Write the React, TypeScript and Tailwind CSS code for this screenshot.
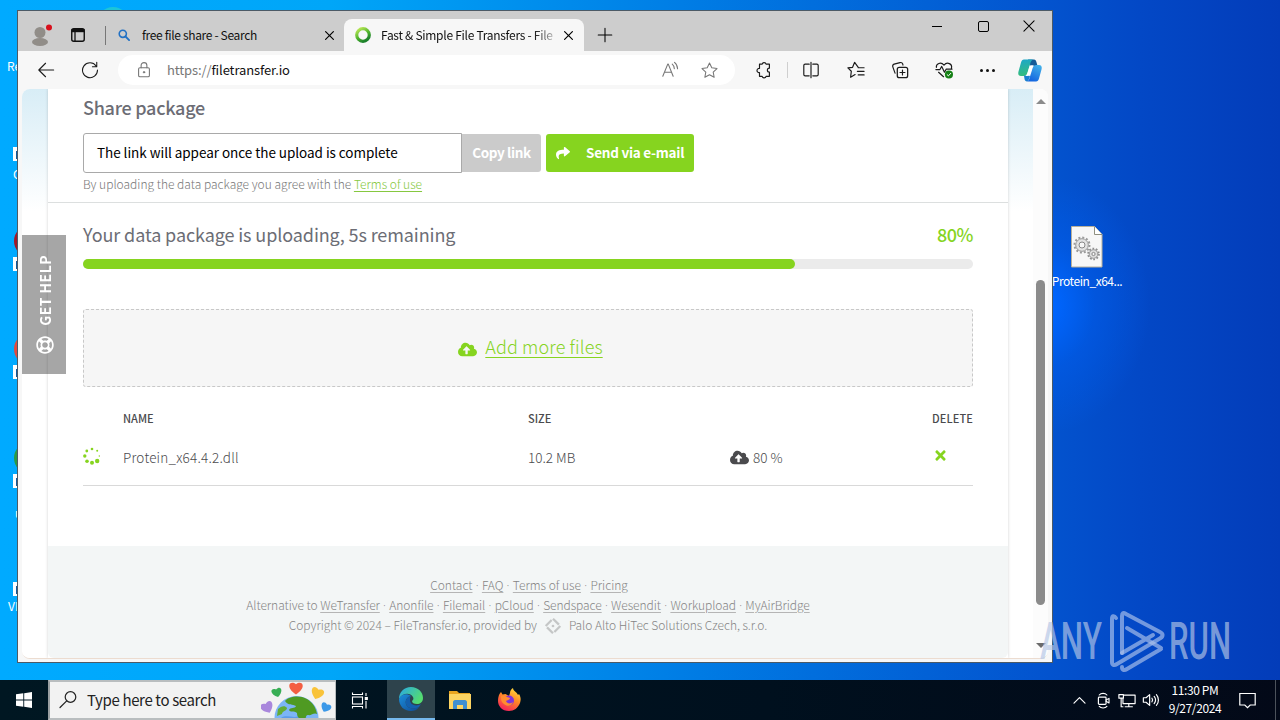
import type { ReactNode } from "react";
import { FaCloudUploadAlt, FaRegLifeRing, FaShare, FaTimes } from "react-icons/fa";

interface IconProps {
  children: ReactNode;
  size?: number;
  className?: string;
}

function Icon({ children, size = 20, className = "" }: IconProps) {
  return (
    <svg
      width={size}
      height={size}
      viewBox="0 0 20 20"
      fill="none"
      stroke="currentColor"
      strokeWidth={1.1}
      strokeLinecap="round"
      strokeLinejoin="round"
      className={`shrink-0 ${className}`}
    >
      {children}
    </svg>
  );
}

const STAR = "M10 2.2l2.4 5 5.5.7-4 3.8 1 5.4-4.9-2.6-4.9 2.6 1-5.4-4-3.8 5.5-.7z";

const SHORTCUTS = [
  { top: "top-[147px]", color: "bg-transparent", label: "C", labelTop: "top-[166px]", labelLeft: "left-[13px]" },
  { top: "top-[257px]", color: "bg-[#a01828]", label: "", labelTop: "top-[292px]", labelLeft: "left-[15px]" },
  { top: "top-[365px]", color: "bg-[#e04a3f]", label: "", labelTop: "top-[400px]", labelLeft: "left-[15px]" },
  { top: "top-[474px]", color: "bg-[#2c9a45]", label: "u", labelTop: "top-[505px]", labelLeft: "left-[15px]" },
  { top: "top-[582px]", color: "bg-transparent", label: "VLC", labelTop: "top-[598px]", labelLeft: "left-[8px]" },
];

function DesktopIcons() {
  return (
    <div className="text-[12px] leading-4 text-white">
      <span className="absolute left-[7px] top-[58px]">Recycle</span>
      <div className="absolute left-[97px] top-[7px] h-8 w-8 rounded-full bg-[#1cc5d8]" />
      {SHORTCUTS.map((s) => (
        <div key={s.top}>
          <div className={`absolute left-[14px] ${s.top}`}>
            <div className={`-mt-8 h-8 w-8 rounded-full ${s.color}`} />
          </div>
          <div className={`absolute left-[13px] h-3.5 w-3 bg-white ${s.top}`}>
            <div className="ml-[3px] mt-1 h-2 w-2 bg-[#145a9c]" />
          </div>
          <span className={`absolute ${s.labelTop} ${s.labelLeft}`}>{s.label}</span>
        </div>
      ))}
      <div className="absolute left-[1050px] top-[225px] flex w-[74px] flex-col items-center">
        <svg width="34" height="44" viewBox="0 0 34 44">
          <path d="M1.5 1.5h23l7.5 8v32.500h-30.500z" fill="#f7f7f7" stroke="#b8b09a" />
          <path d="M24.500 1.500v8h7.500" fill="#fff" stroke="#8f8f80" />
          <circle cx="12" cy="20" r="7.500" fill="none" stroke="#9a9a9a" strokeWidth="2" strokeDasharray="2 1.930" />
          <circle cx="12" cy="20" r="6.300" fill="#e2e2e2" stroke="#999" />
          <circle cx="12" cy="20" r="3" fill="#f7f7f7" stroke="#888" />
          <circle cx="23.500" cy="29" r="5.300" fill="none" stroke="#8e8e8e" strokeWidth="2" strokeDasharray="1.700 1.630" />
          <circle cx="23.500" cy="29" r="4.300" fill="#ddd" stroke="#999" />
          <circle cx="23.500" cy="29" r="1.600" fill="#f7f7f7" stroke="#888" />
        </svg>
        <span className="mt-1 whitespace-nowrap tracking-[-0.45px]">Protein_x64...</span>
      </div>
    </div>
  );
}

function TabStrip() {
  return (
    <div className="flex h-10 bg-[#cdcdcd] text-[12px] tracking-[-0.34px] text-[#111]">
      <div className="flex w-[87px] items-center pl-3 pt-2">
        <svg width="22" height="24" viewBox="0 0 22 24">
          <circle cx="10" cy="9.500" r="5.500" fill="#918d88" />
          <ellipse cx="10" cy="19" rx="8" ry="4" fill="#918d88" />
          <circle cx="19" cy="4.500" r="3" fill="#d8101c" />
        </svg>
        <svg width="16" height="16" viewBox="0 0 16 16" className="ml-[18px] shrink-0">
          <rect x="1.750" y="1.750" width="12.500" height="12.500" rx="2" fill="none" stroke="#111" strokeWidth="1.400" />
          <path d="M1.500 2h13v3.200h-13z" fill="#111" />
          <path d="M5 5v9" stroke="#111" strokeWidth="1.300" />
        </svg>
      </div>
      <div className="mt-[15px] h-[19px] w-px bg-[#777]" />
      <div className="flex w-[238px] items-center pl-3 pt-2">
        <Icon size={12} className="text-[#2271c4]">
          <circle cx="8" cy="8" r="6" strokeWidth="2.600" />
          <path d="M12.500 12.500l6 6" strokeWidth="3" />
        </Icon>
        <span className="ml-3 flex-1 whitespace-nowrap">free file share - Search</span>
        <Icon size={13} className="mr-2 text-black">
          <path d="M4 4l12 12M16 4L4 16" strokeWidth="1.800" />
        </Icon>
      </div>
      <div className="mt-2 flex h-8 w-60 items-center rounded-t-lg bg-[#f7f7f7] pl-[11px]">
        <svg width="16" height="16" viewBox="0 0 16 16" className="shrink-0">
          <defs>
            <linearGradient id="ring" x1="0" y1="0" x2="0.600" y2="1">
              <stop offset="0" stopColor="#c4ec5a" />
              <stop offset="0.600" stopColor="#4fb32c" />
              <stop offset="1" stopColor="#1c812c" />
            </linearGradient>
          </defs>
          <circle cx="8" cy="8" r="6.300" fill="none" stroke="url(#ring)" strokeWidth="3.200" />
        </svg>
        <span className="ml-[10px] w-[173px] whitespace-nowrap tracking-[-0.28px] [mask-image:linear-gradient(to_right,black_88%,#0004)]">
          Fast &amp; Simple File Transfers - File
        </span>
        <Icon size={13} className="ml-2 text-black">
          <path d="M4 4l12 12M16 4L4 16" strokeWidth="1.800" />
        </Icon>
      </div>
      <div className="flex flex-1 justify-between pl-[13px]">
        <Icon size={16} className="mt-4 text-black">
          <path d="M10 1.500v17M1.500 10h17" strokeWidth="1.300" />
        </Icon>
        <div className="flex h-8 text-black">
          <div className="flex w-[46px] items-center justify-center">
            <div className="-mt-0.5 h-px w-2.5 bg-black" />
          </div>
          <div className="flex w-[46px] items-center justify-center">
            <div className="-mt-0.5 h-[11px] w-[11px] rounded-[2px] border border-black" />
          </div>
          <div className="flex w-[46px] items-center justify-center">
            <Icon size={12} className="-mt-0.5">
              <path d="M1.500 1.500l17 17M18.500 1.500l-17 17" strokeWidth="1.700" />
            </Icon>
          </div>
        </div>
      </div>
    </div>
  );
}

function CopilotLogo() {
  return (
    <svg width="24" height="23" viewBox="0 0 24 23">
      <defs>
        <linearGradient id="cpa" x1="0.200" y1="0" x2="0.300" y2="1">
          <stop offset="0" stopColor="#1ca8c8" />
          <stop offset="1" stopColor="#35bd7c" />
        </linearGradient>
        <linearGradient id="cpb" x1="1" y1="0" x2="0.500" y2="1">
          <stop offset="0" stopColor="#45b6ea" />
          <stop offset="1" stopColor="#1668e0" />
        </linearGradient>
      </defs>
      <path d="M10 0.500h6c1.500 0 2 1 2.400 2.500l1.200 4h-7z" fill="#155a97" />
      <path d="M6 .5h9c-2 1-2.500 3-3 5l-2.500 8c-.7 2.500-1.500 3.500-4 3.500H3C.5 17-.2 15 .5 12.500l2.500-9C3.500 1.500 4.500.5 6 .5z" fill="url(#cpa)" />
      <path d="M6 16.500h5l1 1c-.8 2.500-1.300 4-3 5-1.500 0-2.200-1-2.500-2.500z" fill="#1a7fd0" />
      <path d="M18 22.500H9c2-1 2.500-3 3-5l2.500-8c.7-2.500 1.500-3.500 4-3.500H21c2.500 0 3.200 2 2.500 4.500l-2.500 9c-.500 2-1.500 3-3 3z" fill="url(#cpb)" />
      <path d="M13 6.200h3c-1.300 1-1.700 2.200-2.200 4l-1.300 4c-.5 1.500-1.500 2.600-3.500 2.800H7.500c1.300-.8 1.800-2 2.200-3.500l1.300-4.500c.4-1.300 1-2.300 2-2.800z" fill="#fff" />
    </svg>
  );
}

function Toolbar() {
  return (
    <div className="flex h-[38px] items-center bg-[#f7f7f7] text-[#1b1b1b]">
      <div className="flex w-14 justify-center">
        <Icon size={18}>
          <path d="M18.500 10H2M9.500 2.500L2 10l7.500 7.500" strokeWidth="1.200" />
        </Icon>
      </div>
      <div className="flex w-8 justify-center">
        <Icon size={18}>
          <path d="M16.800 5.500A8.300 8.300 0 1 0 18.300 10M17.500 1.500v4.800h-4.800" strokeWidth="1.200" />
        </Icon>
      </div>
      <div className="ml-3 flex h-[30px] w-[617px] items-center rounded-full bg-white pl-[17px] text-[#767676]">
        <Icon size={18}>
          <rect x="4" y="7.500" width="12" height="10" rx="1.500" strokeWidth="1.200" />
          <path d="M6.800 7.500V5a3.200 3.200 0 0 1 6.400 0v2.500" strokeWidth="1.200" />
          <circle cx="10" cy="12.500" r=".8" fill="currentColor" />
        </Icon>
        <span className="ml-[14px] flex-1 text-[13px] leading-5 tracking-[-0.11px]">
          https://<span className="text-[#111]">filetransfer.io</span>
        </span>
        <Icon size={18} className="mr-[21px]">
          <path d="M2 17L7.500 3.500h.6L13.500 17M4 12.500h7.600M12.500 3.500c1.500 1.300 2.200 3 2.300 5M15 1.500c2.200 1.700 3.300 4 3.400 7" strokeWidth="1.200" />
        </Icon>
        <Icon size={19} className="mr-4">
          <path d={STAR} />
        </Icon>
      </div>
      <div className="ml-[6.5px] flex w-11 justify-center">
        <Icon size={18}>
          <path
            d="M5 3.500h3a2.200 2.200 0 0 1 4.300 0H16V8c-3 0-3 4.300 0 4.300V17h-3.700a2.200 2.200 0 0 1-4.300 0H5v-4.200a2.300 2.300 0 1 1 0-4.500z"
            strokeWidth="1.300"
          />
        </Icon>
      </div>
      <div className="mx-px h-4 w-px bg-[#cfcfcf]" />
      <div className="flex w-[45px] justify-center">
        <Icon size={18}>
          <path d="M8 3.500H3.500A1.500 1.500 0 0 0 2 5v10a1.500 1.500 0 0 0 1.500 1.500H8M12 3.500h4.500A1.500 1.500 0 0 1 18 5v10a1.500 1.500 0 0 1-1.500 1.500H12M10 1.500v17" strokeWidth="1.300" />
        </Icon>
      </div>
      <div className="flex w-11 justify-center">
        <Icon size={18}>
          <path d="M12.500 7L8.500 1.500 6.200 7 1 7.700l3.800 3.700L4 18l5-3M12.500 7.500H19M11.500 11.500H19M12.500 15.500H19" strokeWidth="1.300" />
        </Icon>
      </div>
      <div className="flex w-11 justify-center">
        <Icon size={18}>
          <rect x="7" y="7" width="11.500" height="11.500" rx="2.200" strokeWidth="1.400" />
          <path d="M12.750 10v5.500M10 12.750h5.500M4.500 13.500L2 6.500c-.5-1.500 0-2.500 1.500-3L10 1.800c1.500-.4 2.500 0 3 1.500l.3 1.200" strokeWidth="1.300" />
        </Icon>
      </div>
      <div className="flex w-11 justify-center">
        <Icon size={18}>
          <path d="M1.500 7C1 3 6.500.5 10 4.500 13.500.5 19.500 3 18.300 8M1 9.500h4.500L7.500 6l3 6.500 2-3.500H19M4 12.500l5.500 5" strokeWidth="1.300" />
          <circle cx="15.500" cy="15" r="4.500" fill="#158015" stroke="none" />
          <path d="M13.500 15.200l1.400 1.300 2.600-2.800" stroke="#fff" />
        </Icon>
      </div>
      <div className="flex w-11 justify-center gap-[3px]">
        <div className="h-[3px] w-[3px] rounded-full bg-[#111]" />
        <div className="h-[3px] w-[3px] rounded-full bg-[#111]" />
        <div className="h-[3px] w-[3px] rounded-full bg-[#111]" />
      </div>
      <div className="flex w-10 justify-center">
        <CopilotLogo />
      </div>
    </div>
  );
}

const SPINNER_DOTS = [
  { x: 9, y: 2, r: 1.3 },
  { x: 3.800, y: 4, r: 1.400 },
  { x: 1.800, y: 9, r: 1.700 },
  { x: 4, y: 14.200, r: 1.800 },
  { x: 9, y: 15.800, r: 2 },
  { x: 14.200, y: 14, r: 2.200 },
  { x: 16.300, y: 9, r: 0.700 },
  { x: 14.200, y: 3.800, r: 1 },
];

const ALTERNATIVES = ["WeTransfer", "Anonfile", "Filemail", "pCloud", "Sendspace", "Wesendit", "Workupload", "MyAirBridge"];

function FooterLinks({ items }: { items: string[] }) {
  return (
    <>
      {items.map((item, i) => (
        <span key={item}>
          {i > 0 && <span className="font-['Open_Sans',sans-serif] leading-none tracking-[0.1px]"> · </span>}
          <a className="underline decoration-[#b5b5b5] underline-offset-2">{item}</a>
        </span>
      ))}
    </>
  );
}

function UploadCard() {
  return (
    <div className="flex w-[960px] flex-col bg-white text-[#4a4a4d] shadow-[0_0_3px_rgba(0,0,0,0.18)]">
      <section className="h-[114px] border-b border-[#dcdfdf] px-[35px] pt-1.5">
        <h2 className="text-[18px] font-medium leading-6 tracking-[-0.27px] text-[#6c6d75]">Share package</h2>
        <div className="mt-3.5 flex h-10 items-center">
          <div className="flex h-10 w-[379px] items-center rounded-l-[3px] border border-[#a9a9a9] pb-0.5 pl-[13px] text-[13.500px] tracking-[-0.04px] text-black">
            The link will appear once the upload is complete
          </div>
          <button className="h-[38px] w-[79px] rounded-r-[3px] bg-[#cbcbcb] pb-0.5 text-[13.500px] font-bold tracking-[-0.35px] text-white">
            Copy link
          </button>
          <button className="ml-[5px] flex h-[38px] w-[148px] items-center rounded-[3px] bg-[#86d41f] pl-2.5 text-[13.500px] font-bold text-white">
            <FaShare size={14} />
            <span className="ml-4 whitespace-nowrap pb-0.5 tracking-[-0.25px]">Send via e-mail</span>
          </button>
        </div>
        <p className="mt-[3px] text-[12px] font-light leading-4 text-[#777]">
          By uploading the data package you agree with the{" "}
          <a className="text-[#86c840] underline underline-offset-2">Terms of use</a>
        </p>
      </section>

      <section className="h-[343px] px-[35px] pt-[18px]">
        <div className="flex h-[26px] items-center justify-between text-[18px] tracking-[-0.1px] text-[#6c6d75]">
          <span>Your data package is uploading, 5s remaining</span>
          <span className="font-medium tracking-[-0.45px] text-[#86d41f]">80%</span>
        </div>
        <div className="mt-3 h-2.5 rounded-full bg-[#ebebeb]">
          <div className="h-2.5 w-4/5 rounded-full bg-[#86d41f]" />
        </div>
        <div className="mt-10 flex h-[78px] items-center justify-center rounded-[3px] border border-dashed border-[#c8c8c8] bg-[#f6f6f6] pl-[5px] text-[#86d41f]">
          <FaCloudUploadAlt size={19} className="mt-[3px]" />
          <a className="ml-2 pb-[3px] text-[18px] font-light tracking-[0.11px] underline decoration-1 underline-offset-[3px]">Add more files</a>
        </div>
        <div className="mt-[19px] grid h-6 grid-cols-[40px_405px_202px_202px_41px] items-center text-[11px] font-medium">
          <span />
          <span>NAME</span>
          <span>SIZE</span>
          <span />
          <span className="whitespace-nowrap tracking-[0.1px]">DELETE</span>
        </div>
        <div className="grid h-14 grid-cols-[40px_405px_202px_202px_41px] items-center border-b border-[#d9d9d9] text-[13.500px] font-light">
          <svg width="18" height="18" viewBox="0 0 18 18" fill="#86d41f" className="-mt-1">
            {SPINNER_DOTS.map((d) => (
              <circle key={`${d.x}-${d.y}`} cx={d.x} cy={d.y} r={d.r} />
            ))}
          </svg>
          <span className="tracking-[0.2px]">Protein_x64.4.2.dll</span>
          <span>10.2 MB</span>
          <span className="flex items-center gap-1">
            <FaCloudUploadAlt size={19} /> 80 %
          </span>
          <FaTimes size={15} className="-mt-1 ml-px text-[#86d41f]" />
        </div>
      </section>

      <footer className="flex flex-1 flex-col items-center rounded-b-md bg-[#f3f6f6] pt-[29px] text-[12px] font-light leading-5 text-[#858585]">
        <p className="h-5 pl-0.5">
          <FooterLinks items={["Contact", "FAQ", "Terms of use", "Pricing"]} />
        </p>
        <p className="h-5 tracking-[-0.055px]">
          Alternative to <FooterLinks items={ALTERNATIVES} />
        </p>
        <p className="flex h-5 items-center tracking-[-0.05px]">
          Copyright © 2024 – FileTransfer.io, provided by
          <svg width="18" height="18" viewBox="0 0 16 16" fill="none" className="mx-[7px] mt-px">
            <path d="M8 1.500L14.500 8 8 14.500 1.500 8z" stroke="#c4c6c6" strokeWidth="2" strokeDasharray="7.500 1.700" />
            <circle cx="8" cy="8" r="1.200" fill="#c4c6c6" />
          </svg>
          Palo Alto HiTec Solutions Czech, s.r.o.
        </p>
      </footer>
    </div>
  );
}

function BrowserWindow() {
  return (
    <div className="absolute left-[17px] top-[10px] flex h-[653px] w-[1036px] flex-col border border-[#4c5a66] bg-[#f7f7f7]">
      <TabStrip />
      <Toolbar />
      <div className="relative mx-1 mb-[3px] flex flex-1 overflow-hidden rounded-lg border-b border-[#ecdcd0] bg-white">
        <div className="flex w-[1011px] justify-center bg-[linear-gradient(#d8edf6,#ffffff_122px)] pl-px">
          <UploadCard />
        </div>
        <div className="flex flex-1 flex-col items-center bg-[#fcfcfc]">
          <div className="mt-[10px] h-0 w-0 border-x-[5px] border-b-[5px] border-x-transparent border-b-[#8b8b8b]" />
          <div className="mt-[176px] h-[325px] w-[9px] rounded-full bg-[#8b8b8b]" />
          <div className="mt-[38px] h-0 w-0 border-x-[5px] border-t-[5px] border-x-transparent border-t-[#6b6b6b]" />
        </div>
        <div className="absolute left-0 top-[146px] flex h-[139px] w-11 flex-col items-center justify-end bg-black/35 pb-5 pl-px text-white">
          <span className="rotate-180 whitespace-nowrap text-[14px] font-bold leading-5 tracking-[0.45px] [writing-mode:vertical-rl]">GET HELP</span>
          <FaRegLifeRing size={18} className="mt-[10px]" />
        </div>
      </div>
    </div>
  );
}

function Watermark() {
  return (
    <svg
      className="absolute left-[1036px] top-[604px] overflow-visible"
      width="200"
      height="72"
      viewBox="0 0 200 72"
      fill="#b4c6e6"
      fillOpacity="0.68"
    >
      <text x="4" y="55" fontSize="51" fontWeight="500" fontFamily="Roboto, sans-serif" textLength="62" lengthAdjust="spacingAndGlyphs">
        ANY
      </text>
      <g fill="none" stroke="#a9c0ea" strokeOpacity="0.68" strokeWidth="4" strokeLinejoin="round" strokeLinecap="round">
        <path d="M80 14c-2-3-4-2-4 1v43c0 3 2 4 5 2l42-25c4-2 5-5 1-7L90 10c-3-2-4-1-4 2v37" />
        <path d="M91 24l34 20M86 49l31-18M125 45L91 65c-3 2-5 1-5-2" />
      </g>
      <text x="133" y="55" fontSize="51" fontWeight="500" fontFamily="Roboto, sans-serif" textLength="62" lengthAdjust="spacingAndGlyphs">
        RUN
      </text>
    </svg>
  );
}

const HEART = "M0 3.500C-7-1-4-6 0-3 4-6 7-1 0 3.500z";

function Globe() {
  return (
    <svg width="72" height="36" viewBox="0 0 72 36" className="mr-0.5 self-end">
      <path d={HEART} transform="translate(6.500 26) rotate(-25) scale(1.500)" fill="#a987dc" />
      <path d={HEART} transform="translate(16 11) rotate(-15) scale(1.200)" fill="#38ae55" />
      <path d={HEART} transform="translate(35 7) scale(1.600)" fill="#f45e42" />
      <path d={HEART} transform="translate(56 12) rotate(20) scale(1.500)" fill="#f9c33a" />
      <path d={HEART} transform="translate(64.500 26) rotate(25) scale(1.200)" fill="#3b98e8" />
      <circle cx="35.500" cy="36" r="22" fill="#7cb5f5" />
      <path d="M20 36c6-4 12 1 18-2s10 3 6 6H18z" fill="#5b9bea" />
      <path d="M24 19c4-5 15-6 22-2 5 3 9 8 10 15-3-2-6 2-9 1-3 0-1 4-5 5-4-1-6-3-6-7-3-3-7 0-8-3 1-3 6-1 7-4-3-2-8 0-11-5z" fill="#4f9a22" />
      <path d="M17 27c3-3 7-4 9-1 0 3-5 3-5 6l-5 2z" fill="#64ac34" />
    </svg>
  );
}

function EdgeLogo() {
  return (
    <svg width="26" height="26" viewBox="0 0 26 26">
      <defs>
        <linearGradient id="edgeTop" x1="0" y1="0" x2="1" y2="0.500">
          <stop offset="0" stopColor="#28a7e8" />
          <stop offset="1" stopColor="#54dc70" />
        </linearGradient>
        <linearGradient id="edgeLow" x1="0" y1="0" x2="1" y2="1">
          <stop offset="0" stopColor="#1b8edb" />
          <stop offset="1" stopColor="#104b96" />
        </linearGradient>
      </defs>
      <path d="M1 13C1 6 6 1 13 1s12 5 12 11c0 4-3 6-6 6s-5-1-5-3c1-1 2-2 1-4C12 6 4 7 1 13z" fill="url(#edgeTop)" />
      <path d="M1 13c2-5 8-6 12-3-4 1-6 4-5 8 1 4 6 6 13 3-2 3-5 4-8 4C6 25 1 20 1 13z" fill="url(#edgeLow)" />
      <path d="M13 10c-4 1-6 4-5 8 1 4 6 6 13 3l2-3c-5 3-11 1-11-4 0-2 0-3 1-4z" fill="#1460ae" />
    </svg>
  );
}

function Taskbar() {
  return (
    <div className="absolute bottom-0 left-0 flex h-10 w-full bg-[linear-gradient(to_right,#001722,#00101e_60%,#030918)] text-white">
      <div className="flex w-12 items-center justify-center">
        <svg width="16" height="16" viewBox="0 0 16 16" fill="#fff">
          <path d="M0 2.300l7.300-1v6.300H0zM8.200 1.200L16 0v7.600H8.200zM0 8.500h7.300v6.300L0 13.800zM8.200 8.500H16V16l-7.800-1.200z" />
        </svg>
      </div>
      <div className="flex h-10 w-72 items-center border-2 border-r border-[#b9bdbf] border-l-[#9a9fa1] bg-[#f2f2f2] pl-2 text-[#222]">
        <Icon size={20}>
          <circle cx="12.500" cy="7" r="5.300" strokeWidth="1.200" />
          <path d="M8.700 10.800L2 17.500" strokeWidth="1.200" />
        </Icon>
        <span className="ml-[9px] flex-1 whitespace-nowrap text-[15px] tracking-[-0.36px]">Type here to search</span>
        <Globe />
      </div>
      <div className="flex w-[51px] items-center justify-center">
        <svg width="18" height="17" viewBox="0 0 17 17" fill="none" stroke="#fff" strokeWidth="1.100" className="-ml-1">
          <rect x="1" y="5" width="10" height="7" />
          <path d="M1 .5v2h10v-2M1 16.500v-2h10v2M14.500 1v3M14.500 9v7.500" />
          <rect x="13.800" y="5.500" width="2" height="2" fill="#fff" />
        </svg>
      </div>
      <div className="flex w-12 items-center justify-center border-b-2 border-[#76b9ed] bg-[#2e434c]">
        <EdgeLogo />
      </div>
      <div className="flex w-[49px] items-center justify-center">
        <svg width="22" height="20" viewBox="0 0 22 20">
          <path d="M0 1h8l2 2h11v4H0z" fill="#e9a520" />
          <path d="M0 4h22v15H0z" fill="#fcd462" />
          <path d="M4 19v-7c0-1 1-2 2-2h10c1 0 2 1 2 2v7h-4v-4H8v4z" fill="#3f8fd0" />
        </svg>
      </div>
      <div className="flex w-[49px] items-center justify-center">
        <svg width="24" height="24" viewBox="0 0 24 24">
          <defs>
            <linearGradient id="fox" x1="0.800" y1="0" x2="0.300" y2="1">
              <stop offset="0" stopColor="#ffe03d" />
              <stop offset="0.450" stopColor="#ff8a25" />
              <stop offset="1" stopColor="#f5205c" />
            </linearGradient>
          </defs>
          <path d="M2.500 6L4 4l1.500 2.500 3-.5 3.500 2 1-3c0-2 1-4 3-5 0 3 4 4 5 7l1-1c2 3 2 6 1 9-2 5-6 8-11 8C5 23 1 18 1 13c0-3 .5-5 1.500-7z" fill="url(#fox)" />
          <circle cx="12" cy="12.500" r="5" fill="#8034d8" />
          <path d="M4 8c3-1 4 0 6 1l3 1c0 2-3 2-4 3 1 3 5 3 7 1-1 4-6 5-9 2-3-2-3-5-3-8z" fill="#ff8c30" />
        </svg>
      </div>
      <div className="flex flex-1 items-center justify-end">
        <div className="flex w-6 justify-center">
          <Icon size={13}>
            <path d="M1.500 14L10 5.500l8.500 8.500" strokeWidth="1.800" />
          </Icon>
        </div>
        <div className="flex w-6 justify-center">
          <Icon size={17}>
            <rect x="4" y="6" width="9" height="8.500" rx="1" strokeWidth="1.400" />
            <path d="M13 9.500l3.500-2v5.500L13 11M5 3.500c2-2.500 7-2.500 9 0M5 17c2 2.500 7 2.500 9 0" strokeWidth="1.300" />
          </Icon>
        </div>
        <div className="flex w-6 justify-center">
          <Icon size={18}>
            <path d="M6.500 4.500H19v9.500H5.500V9M12 14v3.500M8 17.500h8M1 4h5v4H1zM3.500 8v9.500h2" strokeWidth="1.300" />
          </Icon>
        </div>
        <div className="flex w-6 justify-center">
          <Icon size={18}>
            <path d="M1.500 7.500h3L8.500 4v12l-4-3.500h-3zM11 8c1 1.300 1 2.700 0 4M13.500 6c2 2.500 2 5.500 0 8M16 4c3 3.500 3 8.500 0 12" strokeWidth="1.300" />
          </Icon>
        </div>
        <div className="w-[64px] text-center text-[12px] leading-[18px] tracking-[-0.4px]">
          <div className="-mt-0.5 whitespace-nowrap">11:30 PM</div>
          <div className="whitespace-nowrap">9/27/2024</div>
        </div>
        <div className="flex w-10 justify-center">
          <svg width="17" height="17" viewBox="0 0 17 17" fill="none" stroke="#fff" strokeWidth="1.200">
            <path d="M.8 1.500h15.400v11.500h-5L8.500 15.700 5.800 13h-5z" />
          </svg>
        </div>
        <div className="ml-2 h-10 w-px bg-[#4c525b]" />
        <div className="w-1" />
      </div>
    </div>
  );
}

export default function App() {
  return (
    <div className="relative h-[720px] w-[1280px] overflow-hidden bg-[radial-gradient(ellipse_110px_130px_at_1040px_305px,#0068ff_0%,#0064fb_15%,#005ef080_50%,#0058e000_100%),linear-gradient(to_right,#00aaff_0px,#00a6f8_330px,#007be4_700px,#0354cf_1040px,#0348c6_1140px,#033cb9_1280px)] font-['Noto_Sans_CJK_SC',sans-serif]">
      <DesktopIcons />
      <BrowserWindow />
      <Watermark />
      <Taskbar />
    </div>
  );
}
